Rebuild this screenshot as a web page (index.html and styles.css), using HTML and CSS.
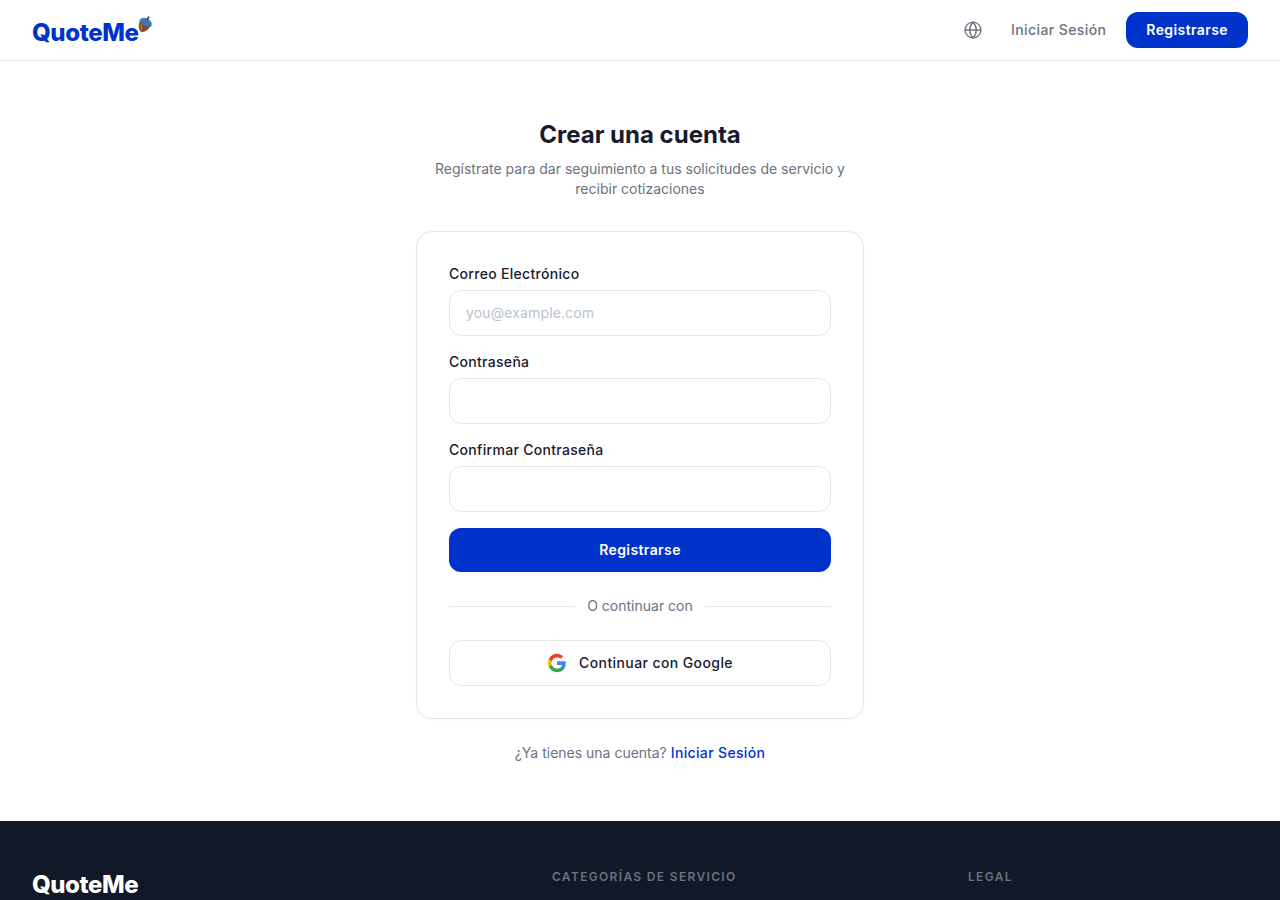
FILE: index.html
```html
<!DOCTYPE html>
<html lang="es">
<head>
    <meta charset="UTF-8">
    <meta name="viewport" content="width=device-width, initial-scale=1.0">
    <title>Crear una cuenta - QuoteMe</title>
    <link rel="stylesheet" href="styles.css">
</head>
<body>
    <header class="navbar">
        <a class="logo" href="#">
            <span class="logo-text">QuoteMe</span>
            <svg class="logo-acorn" viewBox="0 0 14 16" width="16" height="18" aria-hidden="true">
                <g transform="rotate(28 7 8)">
                    <path d="M1.8 8 C2 12.5 5 15.5 7 15.8 C9 15.5 12 12.5 12.2 8 Z" fill="#8a4b25"/>
                    <path d="M4.2 9.5 C4.6 11.5 5.6 13 6.8 14" stroke="#b4733f" stroke-width="1.2" fill="none"/>
                    <path d="M1.2 7.6 C0.9 4.4 4 2.8 7 2.8 C10 2.8 13.1 4.4 12.8 7.6 C12.7 8.6 10 9 7 9 C4 9 1.3 8.6 1.2 7.6 Z" fill="#3f78b8"/>
                    <path d="M7 3.2 L7 1" stroke="#4a3524" stroke-width="1.4" stroke-linecap="round"/>
                </g>
            </svg>
        </a>
        <nav class="nav-actions">
            <button class="lang-button" title="Idioma">
                <svg viewBox="0 0 24 24" width="20" height="20" fill="none" stroke="currentColor" stroke-width="1.6" stroke-linecap="round" stroke-linejoin="round">
                    <circle cx="12" cy="12" r="9.5"/>
                    <path d="M2.5 12h19"/>
                    <path d="M12 2.5c2.6 2.7 4 6 4 9.5s-1.4 6.8-4 9.5c-2.6-2.7-4-6-4-9.5s1.4-6.8 4-9.5z"/>
                </svg>
            </button>
            <a class="nav-link" href="#">Iniciar Sesión</a>
            <a class="nav-cta" href="#">Registrarse</a>
        </nav>
    </header>

    <main class="auth-page">
        <h1>Crear una cuenta</h1>
        <p class="subtitle">Regístrate para dar seguimiento a tus solicitudes de servicio y recibir cotizaciones</p>

        <div class="auth-card">
            <form class="auth-form">
                <div class="form-group">
                    <label for="email">Correo Electrónico</label>
                    <input type="email" id="email" placeholder="you@example.com">
                </div>
                <div class="form-group">
                    <label for="password">Contraseña</label>
                    <input type="password" id="password">
                </div>
                <div class="form-group">
                    <label for="confirm">Confirmar Contraseña</label>
                    <input type="password" id="confirm">
                </div>
                <button type="submit" class="submit-button">Registrarse</button>
            </form>

            <div class="divider"><span>O continuar con</span></div>

            <button class="google-button">
                <svg viewBox="0 0 24 24" width="20" height="20" aria-hidden="true">
                    <path fill="#4285F4" d="M22.56 12.25c0-.78-.07-1.53-.2-2.25H12v4.26h5.92c-.26 1.37-1.04 2.53-2.21 3.31v2.77h3.57c2.08-1.92 3.28-4.74 3.28-8.09z"/>
                    <path fill="#34A853" d="M12 23c2.97 0 5.46-.98 7.28-2.66l-3.57-2.77c-.98.66-2.23 1.06-3.71 1.06-2.86 0-5.29-1.93-6.16-4.53H2.18v2.84C3.99 20.53 7.7 23 12 23z"/>
                    <path fill="#FBBC05" d="M5.84 14.09c-.22-.66-.35-1.36-.35-2.09s.13-1.43.35-2.09V7.07H2.18C1.43 8.55 1 10.22 1 12s.43 3.45 1.18 4.93l3.66-2.84z"/>
                    <path fill="#EA4335" d="M12 5.38c1.62 0 3.06.56 4.21 1.64l3.15-3.15C17.45 2.09 14.97 1 12 1 7.7 1 3.99 3.47 2.18 7.07l3.66 2.84c.87-2.6 3.3-4.53 6.16-4.53z"/>
                </svg>
                <span>Continuar con Google</span>
            </button>
        </div>

        <p class="switch-auth">¿Ya tienes una cuenta? <a href="#">Iniciar Sesión</a></p>
    </main>

    <footer class="footer">
        <div class="footer-brand">QuoteMe</div>
        <h3 class="footer-title">Categorías de Servicio</h3>
        <h3 class="footer-title">Legal</h3>
    </footer>
</body>
</html>
```

FILE: styles.css
```css
* {
    box-sizing: border-box;
}
body {
    margin: 0;
    font-family: Inter, "Noto Sans", sans-serif;
    background-color: #fff;
    color: #1a1a2e;
}
.navbar {
    height: 61px;
    padding: 0 32px;
    display: flex;
    align-items: center;
    justify-content: space-between;
    background: #fff;
    border-bottom: 1px solid #e5e7eb;
}
.logo {
    display: flex;
    align-items: flex-start;
    text-decoration: none;
}
.logo-text {
    font-size: 24px;
    line-height: 32px;
    font-weight: 800;
    letter-spacing: -0.4px;
    color: #0033cc;
    margin-top: 6px;
}
.logo-acorn {
    margin-left: -1px;
    margin-top: 4px;
}
.nav-actions {
    display: flex;
    align-items: center;
    gap: 20px;
}
.lang-button {
    width: 20px;
    height: 20px;
    padding: 0;
    margin-right: 8px;
    background: none;
    border: none;
    color: #6b7280;
    display: flex;
}
.nav-link {
    padding-bottom: 2px;
    font-size: 14px;
    font-weight: 500;
    letter-spacing: 0.4px;
    color: #6b7280;
    text-decoration: none;
}
.nav-cta {
    height: 36px;
    padding: 0 20px 2px;
    display: flex;
    align-items: center;
    font-size: 14px;
    font-weight: 600;
    letter-spacing: 0.4px;
    color: #fff;
    background-color: #0033cc;
    border-radius: 12px;
    text-decoration: none;
}
.auth-page {
    height: 760px;
    padding-top: 60px;
    display: flex;
    flex-direction: column;
    align-items: center;
}
h1 {
    margin: 0;
    font-size: 24px;
    line-height: 28px;
    font-weight: 700;
    color: #1a1a2e;
}
.subtitle {
    width: 448px;
    margin: 10px 0 32px;
    padding: 0 16px;
    font-size: 14px;
    line-height: 20px;
    color: #6b7280;
    text-align: center;
}
.auth-card {
    width: 448px;
    height: 488px;
    padding: 32px;
    background: #fff;
    border: 1px solid #e5e7eb;
    border-radius: 16px;
    box-shadow: 0 1px 2px rgba(0,0,0,0.03);
}
.form-group {
    margin-bottom: 16px;
}
label {
    display: block;
    height: 20px;
    margin-bottom: 6px;
    font-size: 14px;
    line-height: 20px;
    font-weight: 500;
    letter-spacing: 0.3px;
    color: #1a1a2e;
}
input {
    width: 100%;
    height: 46px;
    padding: 0 16px 2px;
    font-family: inherit;
    font-size: 14px;
    letter-spacing: 0.13px;
    background: #fff;
    border: 1px solid #e5e7eb;
    border-radius: 12px;
    outline: none;
}
input::placeholder {
    color: #b8c2d0;
}
.submit-button {
    width: 100%;
    height: 44px;
    padding: 0 0 2px;
    font-family: inherit;
    font-size: 14px;
    font-weight: 600;
    letter-spacing: 0.4px;
    color: #fff;
    background-color: #0033cc;
    border: none;
    border-radius: 12px;
}
.divider {
    margin: 24px 0;
    height: 20px;
    display: flex;
    align-items: center;
    gap: 12px;
    font-size: 14px;
    color: #6b7280;
}
.divider span {
    padding-bottom: 2px;
}
.divider::before,
.divider::after {
    content: "";
    flex: 1;
    height: 1px;
    background-color: #e5e7eb;
}
.google-button {
    width: 100%;
    height: 46px;
    padding: 0 0 2px;
    display: flex;
    align-items: center;
    justify-content: center;
    gap: 12px;
    font-family: inherit;
    font-size: 14px;
    font-weight: 500;
    letter-spacing: 0.4px;
    color: #1a1a2e;
    background: #fff;
    border: 1px solid #e5e7eb;
    border-radius: 12px;
}
.google-button svg {
    margin-top: 2px;
}
.switch-auth {
    margin: 24px 0 0;
    font-size: 14px;
    line-height: 20px;
    color: #6b7280;
}
.switch-auth a {
    font-weight: 500;
    letter-spacing: 0.35px;
    color: #0033cc;
    text-decoration: none;
}
.footer {
    height: 79px;
    padding: 48px 32px 0;
    display: grid;
    grid-template-columns: 520px 416px 1fr;
    background-color: #111827;
    overflow: hidden;
}
.footer-brand {
    font-size: 24px;
    line-height: 32px;
    font-weight: 800;
    letter-spacing: -0.45px;
    color: #fff;
}
.footer-title {
    margin: 0;
    font-size: 12px;
    line-height: 16px;
    font-weight: 600;
    letter-spacing: 1.33px;
    text-transform: uppercase;
    color: #6b7280;
}
```
